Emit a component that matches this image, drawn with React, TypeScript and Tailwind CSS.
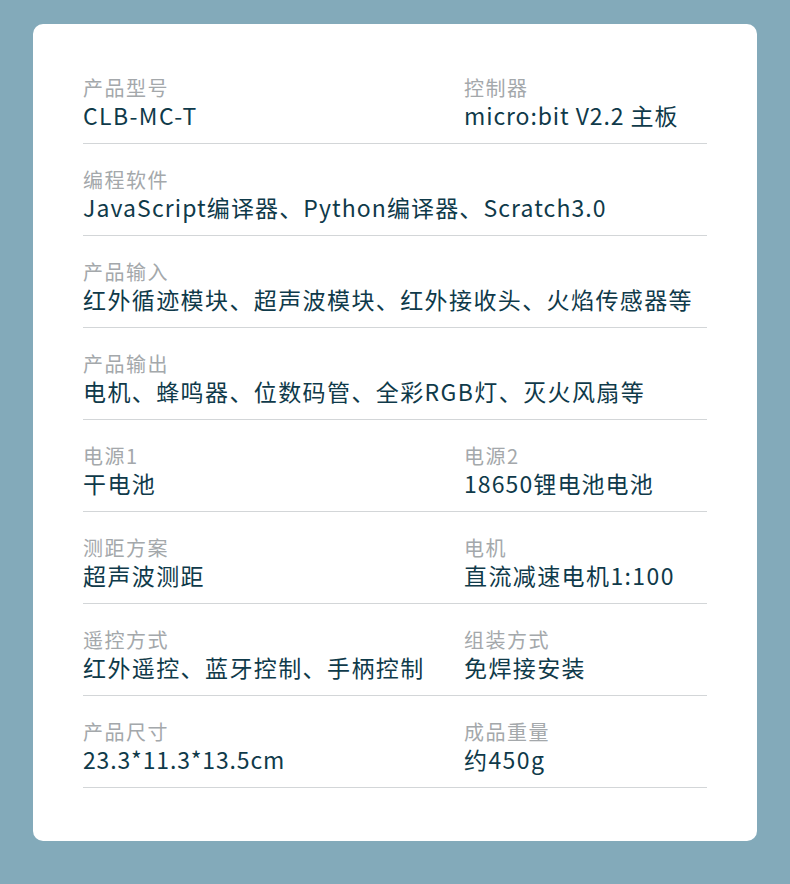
import React from 'react';

type Spec = { label: string; value: string; track?: string };

const ROWS: Spec[][] = [
  [
    { label: '产品型号', value: 'CLB-MC-T' },
    { label: '控制器', value: 'micro:bit V2.2 主板', track: 'tracking-[0.9px]' },
  ],
  [{ label: '编程软件', value: 'JavaScript编译器、Python编译器、Scratch3.0', track: 'tracking-[1.1px]' }],
  [{ label: '产品输入', value: '红外循迹模块、超声波模块、红外接收头、火焰传感器等' }],
  [{ label: '产品输出', value: '电机、蜂鸣器、位数码管、全彩RGB灯、灭火风扇等' }],
  [{ label: '电源1', value: '干电池' }, { label: '电源2', value: '18650锂电池电池', track: 'tracking-[1.1px]' }],
  [{ label: '测距方案', value: '超声波测距' }, { label: '电机', value: '直流减速电机1:100' }],
  [{ label: '遥控方式', value: '红外遥控、蓝牙控制、手柄控制' }, { label: '组装方式', value: '免焊接安装' }],
  [
    { label: '产品尺寸', value: '23.3*11.3*13.5cm', track: 'tracking-[0.85px]' },
    { label: '成品重量', value: '约450g' },
  ],
];

const Cell: React.FC<Spec> = ({ label, value, track }) => (
  <div className="min-w-0">
    <div className="text-[20px] leading-[26px] text-[#a4a8ab] tracking-[1.5px] whitespace-nowrap">{label}</div>
    <div className={`text-[23px] leading-[28px] text-[#0f3a4a] whitespace-nowrap ${track ?? 'tracking-[1.4px]'}`}>
      {value}
    </div>
  </div>
);

export default function App() {
  return (
    <div
      className="min-h-[884px] w-full bg-[#83aaba] pt-[24px] pl-[33px]"
      style={{ fontFamily: '"Noto Sans CJK SC", "Noto Sans", sans-serif' }}
    >
      <div className="w-[724px] h-[817px] bg-white rounded-[10px] px-[50px] pt-[28px]">
        {ROWS.map((row, i) => (
          <div key={i} className="grid grid-cols-[381px_1fr] pt-[23px] pb-[14px] border-b border-[#d3d6d8]">
            {row.map(cell => (
              <Cell key={cell.label} {...cell} />
            ))}
          </div>
        ))}
      </div>
    </div>
  );
}
